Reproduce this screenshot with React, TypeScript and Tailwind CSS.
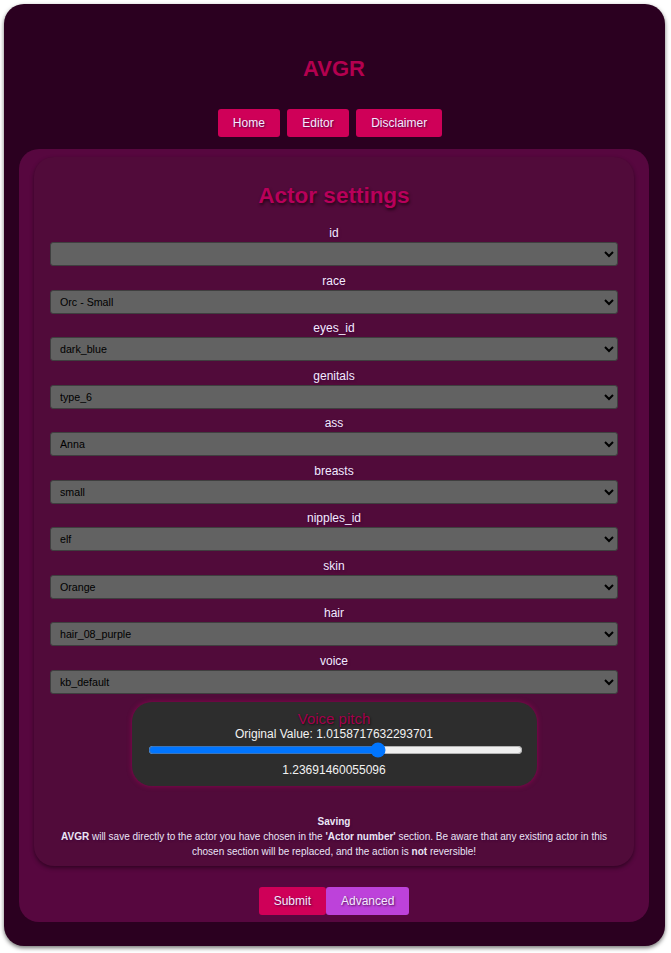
const fields = [
  { label: "id", value: "" },
  { label: "race", value: "Orc - Small" },
  { label: "eyes_id", value: "dark_blue" },
  { label: "genitals", value: "type_6" },
  { label: "ass", value: "Anna" },
  { label: "breasts", value: "small" },
  { label: "nipples_id", value: "elf" },
  { label: "skin", value: "Orange" },
  { label: "hair", value: "hair_08_purple" },
  { label: "voice", value: "kb_default" },
];

const navLinks = ["Home", "Editor", "Disclaimer"];

const whiteShadow = "[text-shadow:1px_1px_2px_rgba(60,0,60,0.8)]";

const App = () => {
  return (
    <div className="min-h-[953px] bg-white pt-[4px] pl-[4px] font-['Liberation_Sans',Arial,sans-serif]">
      <div className="h-[942px] w-[661px] rounded-[20px] bg-[#2b0020] px-[15px] pr-[16px] shadow-[0_2px_4px_rgba(0,0,0,0.55)]">
        <h1 className="pt-[54px] text-center text-[22px] font-bold leading-[22px] text-[#b3004f]">
          AVGR
        </h1>

        <nav className="mt-[29px] flex justify-center gap-[7.5px] pr-[8px]">
          {navLinks.map((link) => (
            <button
              key={link}
              className={`h-[28px] rounded-[3px] bg-[#cf0058] px-[15px] text-[12px] text-[#f4eaff] ${whiteShadow}`}
            >
              {link}
            </button>
          ))}
        </nav>

        <main className="mt-[12px] rounded-[20px] bg-[#57073f] px-[15px] pt-[8px] pb-[7px]">
          <section className="rounded-[20px] bg-[#510b3a] px-[16px] pt-[25px] pb-[7px] shadow-[0_2px_4px_rgba(0,0,0,0.45)]">
            <h2 className="text-center text-[22.5px] font-bold leading-[27px] text-[#b8005a] [text-shadow:1px_2px_3px_rgba(20,0,10,0.7)]">
              Actor settings
            </h2>

            <div className="mt-[17px] flex flex-col gap-[7.5px]">
              {fields.map((field) => (
                <div key={field.label} className="flex flex-col">
                  <label
                    className={`h-[16px] text-center text-[12px] leading-[15px] text-[#f3eaff] ${whiteShadow}`}
                  >
                    {field.label}
                  </label>
                  <select
                    defaultValue={field.value}
                    className="h-[24px] w-full rounded-[3px] border border-[#3f3f3f] bg-[#626262] pl-[5px] text-[10.67px] text-black font-['Liberation_Sans',Arial,sans-serif]"
                  >
                    <option value={field.value}>{field.value}</option>
                  </select>
                </div>
              ))}
            </div>

            <div className="mx-auto mt-[8px] w-[405px] rounded-[20px] bg-[#2d2d2d] pt-[8px] pb-[9px] text-center shadow-[0_0_5px_rgba(170,0,90,0.7)]">
              <h3 className="text-[15px] leading-[17px] text-[#a3004c] [text-shadow:1px_1px_2px_rgba(0,0,0,0.6)]">
                Voice pitch
              </h3>
              <p className="text-[12px] leading-[14px] text-[#f2f2f2]">
                Original Value: 1.0158717632293701
              </p>
              <div className="flex h-[18px] items-center justify-center pl-[3px]">
                <input
                  type="range"
                  min={0}
                  max={2}
                  step="any"
                  defaultValue={1.23691460055096}
                  className="w-[375px]"
                />
              </div>
              <p className="mt-[4px] text-[12px] leading-[14px] text-[#f2f2f2]">
                1.23691460055096
              </p>
            </div>

            <div
              className={`mt-[29px] text-center text-[10px] leading-[14px] text-[#ece4f4] ${whiteShadow}`}
            >
              <p className="font-bold">Saving</p>
              <p className="px-[10px] leading-[15px]">
                <b>AVGR</b> will save directly to the actor you have chosen in
                the <b>'Actor number'</b> section. Be aware that any existing
                actor in this chosen section will be replaced, and the action is{" "}
                <b>not</b> reversible!
              </p>
            </div>
          </section>

          <div className="mt-[21px] flex justify-center">
            <button
              className={`h-[28px] rounded-[3px] bg-[#cf0058] px-[15px] text-[12px] text-[#f4eaff] ${whiteShadow}`}
            >
              Submit
            </button>
            <button
              className={`h-[28px] rounded-[3px] bg-[#bd42da] px-[15px] text-[12px] text-[#f4eaff] ${whiteShadow}`}
            >
              Advanced
            </button>
          </div>
        </main>
      </div>
    </div>
  );
};

export default App;
